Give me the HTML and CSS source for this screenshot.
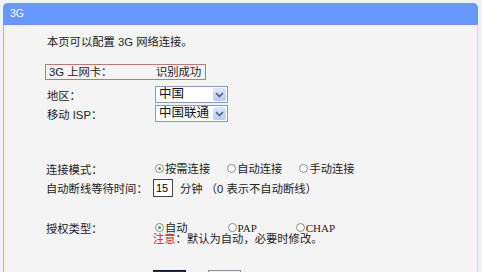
FILE: index.html
```html
<!DOCTYPE html>
<html lang="zh-CN">
<head>
    <meta charset="UTF-8">
    <title>3G</title>
    <link rel="stylesheet" href="styles.css">
</head>
<body>
    <div class="panel">
        <div class="panel-head">3G</div>
        <div class="panel-body">
            <p class="intro">本页可以配置 3G 网络连接。</p>

            <div class="row boxed">
                <span class="label">3G 上网卡：</span>
                <span class="value">识别成功</span>
            </div>

            <div class="row select-row">
                <span class="label">地区：</span>
                <div class="select">
                    <span class="select-text">中国</span>
                    <span class="select-btn"><svg width="9" height="6" viewBox="0 0 9 6"><path d="M1 1 L4.5 4.5 L8 1" fill="none" stroke="#4d6185" stroke-width="1.6"/></svg></span>
                </div>
            </div>

            <div class="row select-row second">
                <span class="label">移动 ISP：</span>
                <div class="select">
                    <span class="select-text">中国联通</span>
                    <span class="select-btn"><svg width="9" height="6" viewBox="0 0 9 6"><path d="M1 1 L4.5 4.5 L8 1" fill="none" stroke="#4d6185" stroke-width="1.6"/></svg></span>
                </div>
            </div>

            <div class="row mode-row">
                <span class="label">连接模式：</span>
                <div class="radios">
                    <span class="radio checked">按需连接</span>
                    <span class="radio">自动连接</span>
                    <span class="radio">手动连接</span>
                </div>
            </div>

            <div class="row idle-row">
                <span class="label">自动断线等待时间：</span>
                <div class="value">
                    <input class="idle-input" type="text" value="15">
                    <span class="unit">分钟 （0 表示不自动断线）</span>
                </div>
            </div>

            <div class="row auth-row">
                <span class="label">授权类型：</span>
                <div class="radios">
                    <span class="radio checked">自动</span>
                    <span class="radio latin">PAP</span>
                    <span class="radio latin">CHAP</span>
                </div>
            </div>

            <div class="row note-row">
                <span class="label"></span>
                <span class="note"><em>注意</em>：默认为自动，必要时修改。</span>
            </div>

            <div class="row btn-row">
                <span class="label"></span>
                <button class="btn btn-dark" aria-label="保存"></button>
                <button class="btn btn-light" aria-label="帮助"></button>
            </div>
        </div>
    </div>
</body>
</html>
```

FILE: styles.css
```css
body {
    margin: 0;
    background-color: #eef2f8;
    font-family: "Liberation Sans", "Noto Sans CJK SC", sans-serif;
    font-size: 11.3px;
    color: #222;
    overflow: hidden;
}

.panel {
    margin: 3px 4px 0 3px;
    height: 300px;
    background-color: #f4f4f4;
    border-left: 1px solid #f0b060;
    border-right: 1px solid #f2d2a8;
    border-radius: 5px 5px 0 0;
}

.panel-head {
    height: 21px;
    line-height: 21px;
    padding-left: 7px;
    background-color: #6699fb;
    border-bottom: 1px solid #7a8fe2;
    border-radius: 5px 5px 0 0;
    color: #fff;
    font-size: 10.5px;
    margin-left: -1px;
    margin-right: -1px;
}

.panel-body {
    padding: 10px 0 0 42px;
    box-shadow: inset 2px 0 0 #fbe9e4;
}

.intro {
    margin: 0 0 0 1px;
    height: 14px;
    line-height: 14px;
}

.row {
    display: flex;
    align-items: center;
}

.label {
    width: 107px;
    flex-shrink: 0;
}

.boxed {
    margin-top: 15px;
    width: 156px;
    height: 14px;
    line-height: 14px;
    padding-left: 3px;
    border: 1px solid #b97a74;
    margin-left: -1px;
}

.select-row {
    margin-top: 6px;
    height: 17px;
}

.select-row .label {
    padding-left: 1px;
    width: 108px;
}

.select-row.second {
    margin-top: 2px;
}

.select {
    display: flex;
    width: 71px;
    height: 15px;
    border: 1px solid #7f9db9;
    background: #fff;
}

.select-text {
    flex: 1;
    font-size: 12.5px;
    line-height: 15px;
    padding-left: 3px;
    color: #111;
}

.select-btn {
    width: 13px;
    margin: 1px;
    display: flex;
    align-items: center;
    justify-content: center;
    background: linear-gradient(#dce6fb, #b8cbf3);
    border-radius: 2px;
}

.mode-row {
    margin-top: 40px;
    height: 14px;
}

.radios {
    display: flex;
}

.radio {
    position: relative;
    padding-left: 12px;
    line-height: 14px;
    margin-right: 15px;
}

.radio::before {
    content: "";
    position: absolute;
    left: 2px;
    top: 2px;
    width: 9px;
    height: 9px;
    border: 1px solid #8a8a8a;
    border-radius: 50%;
    box-sizing: border-box;
    background: #fff;
}

.radio.checked::after {
    content: "";
    position: absolute;
    left: 5px;
    top: 5px;
    width: 3px;
    height: 3px;
    border-radius: 50%;
    background: #3aa84a;
}

.auth-row .radio:nth-child(1) {
    margin-right: 38px;
}

.auth-row .radio:nth-child(2) {
    margin-right: 37px;
}

.latin {
    font-family: "Liberation Serif", serif;
    font-size: 11px;
}

.idle-row {
    margin-top: 2px;
    height: 20px;
}

.idle-row .value {
    display: flex;
    align-items: center;
}

.idle-input {
    width: 14px;
    height: 14px;
    padding: 1px 2px;
    border: 1px solid #444;
    font: inherit;
    font-size: 11px;
    background: #fff;
    margin: 0 7px 0 0;
}

.auth-row {
    margin-top: 23px;
    height: 14px;
}

.note-row {
    height: 12px;
    line-height: 12px;
    margin-top: -2px;
}

.note em {
    font-style: normal;
    color: #d42020;
}

.btn-row {
    margin-top: 25px;
    align-items: flex-start;
}

.btn {
    width: 33px;
    height: 18px;
    padding: 0;
}

.btn-dark {
    background: #1f2a57;
    border: 1px solid #0c1230;
}

.btn-light {
    margin-left: 22px;
    background: #e8ecf4;
    border: 1px solid #8a94aa;
}
```
